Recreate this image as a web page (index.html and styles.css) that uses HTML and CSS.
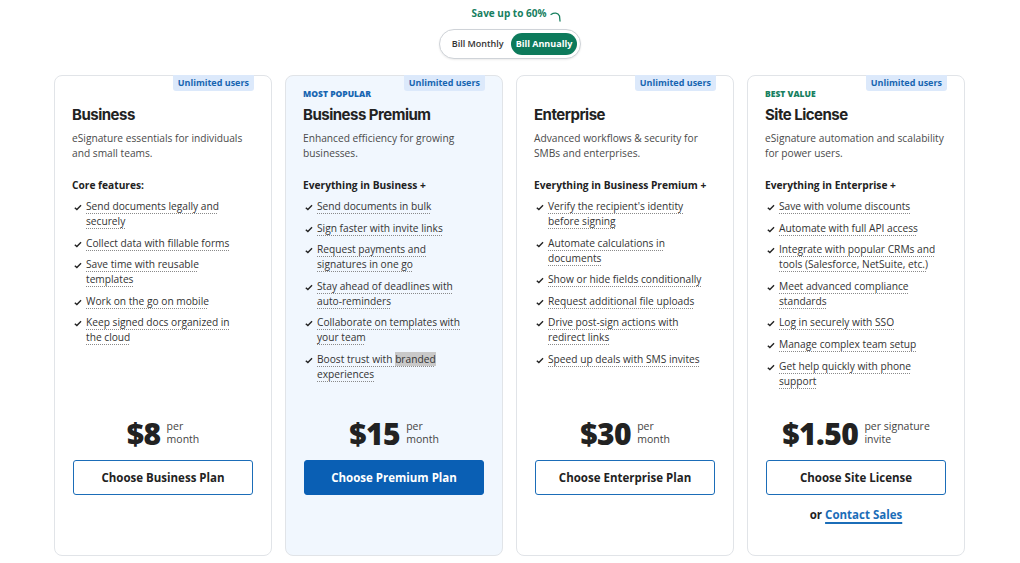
FILE: index.html
```html
<!DOCTYPE html>
<html lang="en">
<head>
<meta charset="utf-8">
<title>Plans</title>
<link rel="stylesheet" href="styles.css">
</head>
<body>
<div class="top">
  <div class="save">Save up to 60%
    <svg class="arrow" width="12" height="12" viewBox="0 0 12 12"><path d="M1 3.5 C4 1.5 8 1.5 9.5 5 L10 10" fill="none" stroke="#17805f" stroke-width="1.3" stroke-linecap="round"/></svg>
  </div>
  <div class="toggle">
    <span class="opt">Bill Monthly</span>
    <span class="opt active">Bill Annually</span>
  </div>
</div>

<div class="cards">
  <div class="card">
    <span class="badge">Unlimited users</span>
    <div class="label"></div>
    <h2 class="title">Business</h2>
    <p class="desc">eSignature essentials for individuals and small teams.</p>
    <div class="features">
      <h3 class="fhead">Core features:</h3>
      <ul class="list">
        <li><svg class="chk" viewBox="0 0 10 8"><path d="M1 4.2 L3.6 6.6 L8.8 1.2"/></svg><span class="ft">Send documents legally and securely</span></li>
        <li><svg class="chk" viewBox="0 0 10 8"><path d="M1 4.2 L3.6 6.6 L8.8 1.2"/></svg><span class="ft">Collect data with fillable forms</span></li>
        <li><svg class="chk" viewBox="0 0 10 8"><path d="M1 4.2 L3.6 6.6 L8.8 1.2"/></svg><span class="ft">Save time with reusable templates</span></li>
        <li><svg class="chk" viewBox="0 0 10 8"><path d="M1 4.2 L3.6 6.6 L8.8 1.2"/></svg><span class="ft">Work on the go on mobile</span></li>
        <li><svg class="chk" viewBox="0 0 10 8"><path d="M1 4.2 L3.6 6.6 L8.8 1.2"/></svg><span class="ft">Keep signed docs organized in the cloud</span></li>
      </ul>
    </div>
    <div class="foot">
      <div class="price"><span class="amt">$8</span><span class="per">per<br>month</span></div>
      <a class="btn">Choose Business Plan</a>
      <div class="slot"></div>
    </div>
  </div>

  <div class="card popular">
    <span class="badge">Unlimited users</span>
    <div class="label blue">MOST POPULAR</div>
    <h2 class="title">Business Premium</h2>
    <p class="desc">Enhanced efficiency for growing businesses.</p>
    <div class="features">
      <h3 class="fhead">Everything in Business +</h3>
      <ul class="list">
        <li><svg class="chk" viewBox="0 0 10 8"><path d="M1 4.2 L3.6 6.6 L8.8 1.2"/></svg><span class="ft">Send documents in bulk</span></li>
        <li><svg class="chk" viewBox="0 0 10 8"><path d="M1 4.2 L3.6 6.6 L8.8 1.2"/></svg><span class="ft">Sign faster with invite links</span></li>
        <li><svg class="chk" viewBox="0 0 10 8"><path d="M1 4.2 L3.6 6.6 L8.8 1.2"/></svg><span class="ft">Request payments and signatures in one go</span></li>
        <li><svg class="chk" viewBox="0 0 10 8"><path d="M1 4.2 L3.6 6.6 L8.8 1.2"/></svg><span class="ft">Stay ahead of deadlines with auto-reminders</span></li>
        <li><svg class="chk" viewBox="0 0 10 8"><path d="M1 4.2 L3.6 6.6 L8.8 1.2"/></svg><span class="ft">Collaborate on templates with your team</span></li>
        <li><svg class="chk" viewBox="0 0 10 8"><path d="M1 4.2 L3.6 6.6 L8.8 1.2"/></svg><span class="ft">Boost trust with <span class="sel">branded</span> experiences</span></li>
      </ul>
    </div>
    <div class="foot">
      <div class="price"><span class="amt">$15</span><span class="per">per<br>month</span></div>
      <a class="btn primary">Choose Premium Plan</a>
      <div class="slot"></div>
    </div>
  </div>

  <div class="card">
    <span class="badge">Unlimited users</span>
    <div class="label"></div>
    <h2 class="title">Enterprise</h2>
    <p class="desc">Advanced workflows &amp; security for SMBs and enterprises.</p>
    <div class="features">
      <h3 class="fhead">Everything in Business Premium +</h3>
      <ul class="list">
        <li><svg class="chk" viewBox="0 0 10 8"><path d="M1 4.2 L3.6 6.6 L8.8 1.2"/></svg><span class="ft">Verify the recipient's identity before signing</span></li>
        <li><svg class="chk" viewBox="0 0 10 8"><path d="M1 4.2 L3.6 6.6 L8.8 1.2"/></svg><span class="ft">Automate calculations in documents</span></li>
        <li><svg class="chk" viewBox="0 0 10 8"><path d="M1 4.2 L3.6 6.6 L8.8 1.2"/></svg><span class="ft">Show or hide fields conditionally</span></li>
        <li><svg class="chk" viewBox="0 0 10 8"><path d="M1 4.2 L3.6 6.6 L8.8 1.2"/></svg><span class="ft">Request additional file uploads</span></li>
        <li><svg class="chk" viewBox="0 0 10 8"><path d="M1 4.2 L3.6 6.6 L8.8 1.2"/></svg><span class="ft">Drive post-sign actions with redirect links</span></li>
        <li><svg class="chk" viewBox="0 0 10 8"><path d="M1 4.2 L3.6 6.6 L8.8 1.2"/></svg><span class="ft">Speed up deals with SMS invites</span></li>
      </ul>
    </div>
    <div class="foot">
      <div class="price"><span class="amt">$30</span><span class="per">per<br>month</span></div>
      <a class="btn">Choose Enterprise Plan</a>
      <div class="slot"></div>
    </div>
  </div>

  <div class="card">
    <span class="badge">Unlimited users</span>
    <div class="label green">BEST VALUE</div>
    <h2 class="title">Site License</h2>
    <p class="desc">eSignature automation and scalability for power users.</p>
    <div class="features">
      <h3 class="fhead">Everything in Enterprise +</h3>
      <ul class="list">
        <li><svg class="chk" viewBox="0 0 10 8"><path d="M1 4.2 L3.6 6.6 L8.8 1.2"/></svg><span class="ft">Save with volume discounts</span></li>
        <li><svg class="chk" viewBox="0 0 10 8"><path d="M1 4.2 L3.6 6.6 L8.8 1.2"/></svg><span class="ft">Automate with full API access</span></li>
        <li><svg class="chk" viewBox="0 0 10 8"><path d="M1 4.2 L3.6 6.6 L8.8 1.2"/></svg><span class="ft">Integrate with popular CRMs and tools (Salesforce, NetSuite, etc.)</span></li>
        <li><svg class="chk" viewBox="0 0 10 8"><path d="M1 4.2 L3.6 6.6 L8.8 1.2"/></svg><span class="ft">Meet advanced compliance standards</span></li>
        <li><svg class="chk" viewBox="0 0 10 8"><path d="M1 4.2 L3.6 6.6 L8.8 1.2"/></svg><span class="ft">Log in securely with SSO</span></li>
        <li><svg class="chk" viewBox="0 0 10 8"><path d="M1 4.2 L3.6 6.6 L8.8 1.2"/></svg><span class="ft">Manage complex team setup</span></li>
        <li><svg class="chk" viewBox="0 0 10 8"><path d="M1 4.2 L3.6 6.6 L8.8 1.2"/></svg><span class="ft">Get help quickly with phone support</span></li>
      </ul>
    </div>
    <div class="foot">
      <div class="price"><span class="amt">$1.50</span><span class="per">per signature<br>invite</span></div>
      <a class="btn">Choose Site License</a>
      <div class="slot"><span class="or">or <a class="contact">Contact Sales</a></span></div>
    </div>
  </div>
</div>
</body>
</html>
```

FILE: styles.css
```css
* { box-sizing: border-box; }
html, body { margin: 0; padding: 0; }
body {
  font-family: "Open Sans", "Liberation Sans", sans-serif;
  color: #222;
  background: #fff;
  width: 1020px;
  height: 563px;
  overflow: hidden;
}
.top {
  display: flex;
  flex-direction: column;
  align-items: center;
  padding-top: 6px;
}
.save {
  display: flex;
  align-items: flex-start;
  gap: 4px;
  color: #17805f;
  font-size: 10px;
  font-weight: 700;
  line-height: 14px;
  margin-left: 14px;
}
.arrow { margin-top: 5px; }
.toggle {
  margin-top: 6px;
  display: flex;
  align-items: center;
  border: 1px solid #cfd3d8;
  border-radius: 16px;
  padding: 3px;
  box-shadow: 0 1px 2px rgba(0,0,0,0.08);
  background: #fff;
}
.opt {
  font-size: 9px;
  font-weight: 600;
  color: #333;
  padding: 4px 7px 5px 9px;
  line-height: 13px;
}
.opt.active {
  background: #0d7a5b;
  color: #fff;
  font-weight: 700;
  border-radius: 12px;
  padding: 4px 5px 5px 5px;
}
.cards {
  display: grid;
  grid-template-columns: repeat(4, 218px);
  gap: 13px;
  padding-left: 54px;
  margin-top: 16px;
}
.card {
  position: relative;
  height: 481px;
  border: 1px solid #e1e4e8;
  border-radius: 8px;
  padding: 0 17px;
  display: flex;
  flex-direction: column;
  background: #fff;
}
.card.popular { background: #f1f7fe; }
.badge {
  position: absolute;
  top: -1px;
  right: 17px;
  background: #dce9fb;
  color: #1765b1;
  font-size: 9px;
  font-weight: 700;
  line-height: 16px;
  padding: 0 5px;
  border-radius: 0 0 3px 3px;
}
.label {
  margin-top: 12px;
  height: 12px;
  font-size: 8.5px;
  font-weight: 800;
  line-height: 12px;
}
.label.blue { color: #1765b1; }
.label.green { color: #17805f; }
.title {
  margin: 5px 0 0;
  font-family: Inter, "Liberation Sans", sans-serif;
  font-size: 15px;
  font-weight: 700;
  letter-spacing: -0.5px;
  line-height: 20px;
  color: #222;
}
.desc {
  margin: 6px 0 0;
  font-size: 10.2px;
  line-height: 15px;
  color: #4a4a4a;
}
.features { flex: 1; }
.fhead {
  margin: 17px 0 0;
  font-size: 10.2px;
  font-weight: 700;
  line-height: 15px;
  color: #222;
}
.list {
  list-style: none;
  margin: 6px 0 0;
  padding: 0 10px 0 2px;
}
.list li {
  display: flex;
  align-items: flex-start;
  gap: 4px;
  font-size: 10.2px;
  line-height: 15px;
  color: #333;
  margin-bottom: 6.6px;
}
.chk {
  flex: none;
  width: 8px;
  height: 7px;
  margin-top: 5px;
  fill: none;
  stroke: #222;
  stroke-width: 1.7;
}
.ft {
  text-decoration: underline dotted #8a8a8a;
  text-decoration-thickness: 1px;
  text-underline-offset: 3px;
}
.sel { background: #c9c9c9; }
.foot {
  display: flex;
  flex-direction: column;
  align-items: center;
}
.price {
  display: flex;
  align-items: center;
  gap: 6px;
  height: 30px;
}
.amt {
  font-size: 30px;
  font-weight: 800;
  letter-spacing: -0.5px;
  color: #222;
  line-height: 30px;
}
.per {
  font-size: 10.5px;
  line-height: 13px;
  color: #444;
  margin-top: -3px;
}
.btn {
  margin-top: 11px;
  display: flex;
  align-items: center;
  justify-content: center;
  width: 180px;
  height: 35px;
  border: 1.5px solid #1b6db8;
  border-radius: 3px;
  font-size: 11.5px;
  font-weight: 700;
  color: #222;
  background: #fff;
}
.btn.primary {
  background: #0a5fb4;
  border-color: #0a5fb4;
  color: #fff;
}
.slot {
  height: 60px;
  padding-top: 7px;
  text-align: center;
}
.or {
  font-size: 11.5px;
  font-weight: 700;
  color: #222;
}
.contact {
  color: #1b6db8;
  text-decoration: underline;
  text-decoration-thickness: 1.5px;
  text-underline-offset: 3px;
}
```
